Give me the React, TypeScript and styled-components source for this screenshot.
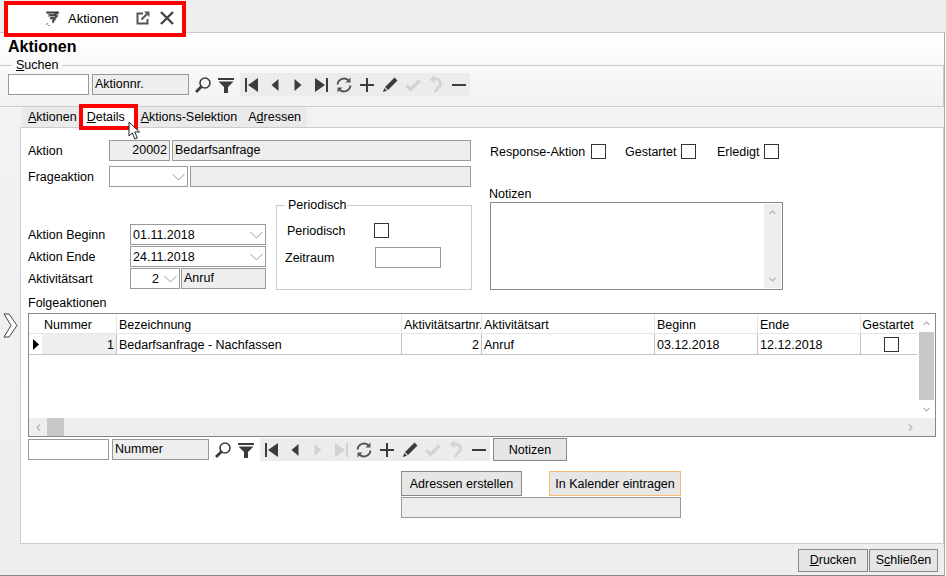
import React from "react"
import styled, { createGlobalStyle } from "styled-components"

const GlobalStyle = createGlobalStyle`
  html, body {
    margin: 0;
    padding: 0;
    background: #fff;
  }
  * {
    box-sizing: border-box;
  }
`

const Page = styled.div`
  width: 946px;
  height: 576px;
  display: flex;
  flex-direction: column;
  overflow: hidden;
  background: #fff;
  color: #000;
  font-family: "Liberation Sans", Arial, sans-serif;
  font-size: 12.5px;
`

const TabBar = styled.div`
  height: 33px;
  flex: none;
  padding: 1px 0 0 4px;
  background: #eee;
  border-bottom: 1px solid #ccc;
`

const OpenTab = styled.div`
  position: relative;
  z-index: 2;
  width: 182px;
  height: 36px;
  display: flex;
  align-items: center;
  padding: 0 0 2px 37px;
  background: #fff;
  border: 4px solid #f00;
  font-size: 13px;
  svg {
    flex: none;
  }
`

const OpenTabLabel = styled.span`
  margin: 0 16px 0 8px;
  width: 52px;
  white-space: nowrap;
`

const CloseIcon = styled.svg`
  margin-left: 10px;
`

const Window = styled.div`
  flex: 1;
  min-height: 0;
  display: flex;
  flex-direction: column;
  background: linear-gradient(#fff 0, #f2f2f2 72px, #eee 100%);
  border-right: 1px solid #aaa;
  border-bottom: 1px solid #888;
  margin-right: 1px;
`

const Title = styled.h1`
  margin: 0;
  height: 25px;
  flex: none;
  padding: 5px 0 0 8px;
  font-size: 16px;
  line-height: 18px;
  font-weight: bold;
`

const SearchGroup = styled.fieldset`
  margin: 0;
  flex: none;
  padding: 1px 0 10px 8px;
  border: 0;
  border-top: 1px solid #ccc;
  border-bottom: 1px solid #ccc;
  border-right: 1px solid #ccc;
`

const GroupLegend = styled.legend`
  margin-left: 4px;
  padding: 0 4px;
  height: 14px;
  line-height: 14px;
`

const ToolRow = styled.div`
  display: flex;
  align-items: center;
  height: 23px;
  margin-top: ${(p: { $top?: number }) => p.$top ?? 0}px;
`

const ToolInput = styled.div`
  width: 81px;
  height: 21px;
  background: #fff;
  border: 1px solid #999;
`

const ToolField = styled.div`
  width: 97px;
  height: 21px;
  margin: 0 2px 0 3px;
  padding-left: 2px;
  line-height: 19px;
  background: #eee;
  border: 1px solid #999;
`

const NavGroup = styled.div`
  display: flex;
  margin-left: 3px;
  background: #ececec;
`

const IconSlot = styled.span`
  width: 23px;
  height: 23px;
  display: flex;
  align-items: center;
  justify-content: center;
`

const ToolButton = styled.div`
  width: 74px;
  height: 23px;
  margin-left: 3px;
  text-align: center;
  line-height: 23px;
  background: #e6e6e6;
  border: 1px solid #888;
`

const MainRow = styled.div`
  flex: 1;
  min-height: 0;
  display: flex;
`

const SideStrip = styled.div`
  width: 20px;
  flex: none;
  display: flex;
  align-items: center;
  justify-content: center;
`

const Content = styled.div`
  position: relative;
  flex: 1;
  min-width: 0;
  display: flex;
  flex-direction: column;
`

const TabStrip = styled.div`
  flex: none;
  align-self: flex-start;
  height: 20px;
  margin-left: 2px;
  width: 285px;
  display: flex;
  align-items: center;
  background: #eaeaea;
`

const TabItem = styled.div<{ $left: number }>`
  margin-left: ${(p) => p.$left}px;
  white-space: nowrap;
`

const ActiveTab = styled.div`
  position: relative;
  z-index: 2;
  flex: none;
  width: 59px;
  height: 26px;
  margin: -3px 0 -3px 0;
  padding: 1px 0 0 4px;
  line-height: 16px;
  background: #fff;
  border: 4px solid #f00;
  white-space: nowrap;
`

const Pointer = styled.svg`
  position: absolute;
  z-index: 3;
  left: 108px;
  top: 14px;
`

const Panel = styled.div`
  flex: 1;
  min-height: 0;
  padding: 12px 0 0 7px;
  background: #fff;
  border: 1px solid #ccc;
`

const TopSection = styled.div`
  display: flex;
  gap: 18px;
`

const LeftColumn = styled.div`
  width: 444px;
  flex: none;
`

const RightColumn = styled.div`
  width: 293px;
  flex: none;
  padding-top: 4px;
`

const FieldRow = styled.div<{ $top?: number; $gap?: number }>`
  display: flex;
  align-items: center;
  height: 21px;
  gap: ${(p) => p.$gap ?? 2}px;
  margin-top: ${(p) => p.$top ?? 0}px;
`

const Label = styled.span<{ $w: number; $pad?: number }>`
  flex: none;
  width: ${(p) => p.$w}px;
  padding-left: ${(p) => p.$pad ?? 0}px;
  white-space: nowrap;
`

const ReadOnly = styled.div<{ $w?: number; $right?: boolean }>`
  height: 21px;
  flex: ${(p) => (p.$w ? "none" : 1)};
  width: ${(p) => (p.$w ? `${p.$w}px` : "auto")};
  margin-right: ${(p) => (p.$w ? 0 : 1)}px;
  padding: 0 2px;
  line-height: 19px;
  text-align: ${(p) => (p.$right ? "right" : "left")};
  background: #eee;
  border: 1px solid #999;
`

const Combo = styled.div<{ $w?: number; $right?: boolean }>`
  height: 21px;
  flex: ${(p) => (p.$w ? "none" : 1)};
  width: ${(p) => (p.$w ? `${p.$w}px` : "auto")};
  display: flex;
  align-items: center;
  padding: 0 1px 0 2px;
  background: #fff;
  border: 1px solid #999;
  span {
    flex: 1;
    text-align: ${(p) => (p.$right ? "right" : "left")};
    padding-right: ${(p) => (p.$right ? 4 : 0)}px;
  }
  svg {
    flex: none;
  }
`

const LowerLeft = styled.div`
  display: flex;
  margin-top: 11px;
`

const Dates = styled.div`
  width: 238px;
  flex: none;
  padding-top: 26px;
  display: flex;
  flex-direction: column;
  gap: 1px;
`

const PeriodGroup = styled.fieldset`
  width: 196px;
  height: 92px;
  flex: none;
  margin: 0 0 0 10px;
  padding: 0 0 0 8px;
  border: 1px solid #ccc;
`

const PeriodLegend = styled.legend`
  margin-left: 0;
  padding: 0 1px 0 3px;
  height: 14px;
  line-height: 14px;
`

const CheckBox = styled.span`
  display: block;
  flex: none;
  width: 15px;
  height: 15px;
  background: #fff;
  border: 1px solid #333;
`

const PlainInput = styled.div`
  width: 66px;
  height: 21px;
  flex: none;
  background: #fff;
  border: 1px solid #999;
`

const CheckRow = styled.div`
  display: flex;
  align-items: center;
  height: 15px;
`

const CheckItem = styled.div<{ $gap?: number }>`
  display: flex;
  align-items: center;
  margin-right: ${(p) => p.$gap ?? 0}px;
`

const NotesLabel = styled.div`
  margin: 28px 0 1px -1px;
  height: 14px;
  line-height: 14px;
`

const NotesBox = styled.div`
  height: 88px;
  display: flex;
  justify-content: flex-end;
  padding: 1px;
  background: #fff;
  border: 1px solid #888;
`

const ScrollTrack = styled.div<{ $w?: number }>`
  width: ${(p) => p.$w ?? 17}px;
  flex: none;
  display: flex;
  flex-direction: column;
  align-items: center;
  justify-content: space-between;
  padding: 5px 0;
  background: #eee;
`

const SectionLabel = styled.div`
  margin-top: 6px;
  height: 14px;
  line-height: 14px;
`

const GridFrame = styled.div`
  width: 908px;
  height: 124px;
  margin-top: 3px;
  display: flex;
  flex-direction: column;
  background: #fff;
  border: 1px solid #888;
`

const GridBody = styled.div`
  flex: 1;
  min-height: 0;
  display: flex;
`

const GridTable = styled.div`
  flex: 1;
  min-width: 0;
`

const GridRow = styled.div<{ $head?: boolean }>`
  display: flex;
  height: ${(p) => (p.$head ? 20 : 21)}px;
  border-bottom: 1px solid ${(p) => (p.$head ? "#e6e6e6" : "#c4c4c4")};
`

const Cell = styled.div<{ $w: number; $head?: boolean; $right?: boolean; $key?: boolean }>`
  flex: none;
  width: ${(p) => p.$w}px;
  display: flex;
  align-items: center;
  justify-content: ${(p) => (p.$right ? "flex-end" : "flex-start")};
  padding: 2px 2px 0;
  white-space: nowrap;
  overflow: hidden;
  background: ${(p) => (p.$key ? "#eee" : "#fff")};
  border-right: 1px solid ${(p) => (p.$head ? "#e6e6e6" : "#c4c4c4")};
`

const MarkerCell = styled.div`
  flex: none;
  width: 13px;
  display: flex;
  align-items: center;
  padding-left: 4px;
`

const HeadEndCell = styled.div`
  flex: 1;
  display: flex;
  align-items: center;
  justify-content: center;
  padding: 2px 2px 0 0;
  white-space: nowrap;
`

const CheckCell = styled.div`
  flex: 1;
  display: flex;
  align-items: center;
  justify-content: center;
  padding-left: 4px;
`

const GridVScroll = styled.div`
  width: 18px;
  flex: none;
  display: flex;
  flex-direction: column;
  align-items: center;
  background: #fff;
`

const ScrollEnd = styled.div`
  height: 18px;
  flex: none;
  display: flex;
  align-items: center;
  justify-content: center;
`

const VThumb = styled.div`
  width: 15px;
  flex: 1;
  background: #c8c8c8;
`

const GridHScroll = styled.div`
  height: 18px;
  flex: none;
  display: flex;
  align-items: center;
  padding: 0 20px 0 0;
  background: #eee;
`

const HThumb = styled.div`
  width: 17px;
  height: 18px;
  background: #c8c8c8;
`

const HTrack = styled.div`
  flex: 1;
`

const ArrowSlot = styled.div`
  width: 18px;
  flex: none;
  display: flex;
  justify-content: center;
`

const ActionBlock = styled.div`
  width: 280px;
  margin: 10px 0 0 373px;
`

const ActionButtons = styled.div`
  display: flex;
  justify-content: space-between;
`

const ActionButton = styled.div<{ $focus?: boolean; $w: number }>`
  width: ${(p) => p.$w}px;
  height: 25px;
  text-align: center;
  line-height: 25px;
  background: #e6e6e6;
  border: 1px solid ${(p) => (p.$focus ? "#f5bd6c" : "#888")};
`

const StatusField = styled.div`
  height: 21px;
  margin-top: 1px;
  background: #eee;
  border: 1px solid #999;
`

const Footer = styled.div`
  height: 31px;
  flex: none;
  display: flex;
  justify-content: flex-end;
  gap: 1px;
  padding: 5px 6px 0 0;
  background: #eee;
`

const FooterButton = styled.div<{ $w: number }>`
  width: ${(p) => p.$w}px;
  height: 23px;
  text-align: center;
  line-height: 21px;
  background: #e6e6e6;
  border: 1px solid #888;
`

const DARK = "#3c3c3c"
const LIGHT = "#d2d2d2"

type IconName =
  | "first"
  | "prev"
  | "next"
  | "last"
  | "refresh"
  | "plus"
  | "pencil"
  | "check"
  | "undo"
  | "minus"

const ToolIcon: React.FC<{ name: IconName; off?: boolean }> = ({ name, off }) => {
  const c = off ? LIGHT : DARK
  return (
    <svg width="20" height="20" viewBox="0 0 20 20">
      {name === "first" && (
        <>
          <rect x="3" y="3" width="2" height="14" fill={c} />
          <path d="M16 3v14L6 10z" fill={c} />
        </>
      )}
      {name === "prev" && <path d="M13.500 4v12L6.500 10z" fill={c} />}
      {name === "next" && <path d="M6.500 4v12l7-6z" fill={c} />}
      {name === "last" && (
        <>
          <rect x="15" y="3" width="2" height="14" fill={c} />
          <path d="M4 3v14l10-7z" fill={c} />
        </>
      )}
      {name === "refresh" && (
        <g fill="none" stroke="#555" strokeWidth="2">
          <path d="M3.600 9.500A6.500 6.500 0 0 1 15 5.800" />
          <path d="M16.400 10.500A6.500 6.500 0 0 1 5 14.200" />
          <path d="M16.500 2.500v5h-5z" fill="#555" stroke="none" />
          <path d="M3.500 17.500v-5h5z" fill="#555" stroke="none" />
        </g>
      )}
      {name === "plus" && <path d="M9 3h2v6h6v2h-6v6H9v-6H3V9h6z" fill={c} />}
      {name === "pencil" && (
        <path d="M14.500 2.500l3 3L8 15l-3-3zM4.300 13l2.700 2.700L3 17z" fill={c} />
      )}
      {name === "check" && (
        <path d="M3.500 10.500l4 4 9-9" fill="none" stroke={c} strokeWidth="3.200" />
      )}
      {name === "undo" && (
        <g fill="none" stroke={c} strokeWidth="2.600">
          <path d="M6 4h4a4.500 4.500 0 0 1 2 8.500L9 17" />
          <path d="M8.500 1.500L5 4.500l4 2.500" strokeWidth="2" />
        </g>
      )}
      {name === "minus" && <rect x="3" y="9" width="14" height="2" fill={c} />}
    </svg>
  )
}

const SearchIcon = () => (
  <svg width="18" height="18" viewBox="0 0 18 18">
    <circle cx="11" cy="7" r="5" fill="none" stroke={DARK} strokeWidth="1.600" />
    <path d="M7.500 10.500L2 16" stroke={DARK} strokeWidth="2.800" />
  </svg>
)

const FilterIcon = () => (
  <svg width="18" height="18" viewBox="0 0 18 18">
    <rect x="1" y="2" width="16" height="2" fill={DARK} />
    <path d="M1.500 5.500h15L11 11v6H7v-6z" fill={DARK} />
  </svg>
)

const ChevronDown = () => (
  <svg width="15" height="10" viewBox="0 0 15 10">
    <path d="M1.500 2l6 6 6-6" fill="none" stroke="#9a9a9a" strokeWidth="1" />
  </svg>
)

const SmallArrow: React.FC<{ rotate: number }> = ({ rotate }) => (
  <svg width="9" height="7" viewBox="0 0 9 7" style={{ transform: `rotate(${rotate}deg)` }}>
    <path d="M1.500 5l3-3 3 3" fill="none" stroke="#b4b4b4" strokeWidth="1.200" />
  </svg>
)

const ToolBar: React.FC<{ field: string; disabled: IconName[]; top?: number; children?: React.ReactNode }> = ({
  field,
  disabled,
  top,
  children,
}) => {
  const names: IconName[] = ["first", "prev", "next", "last", "refresh", "plus", "pencil", "check", "undo", "minus"]
  return (
    <ToolRow $top={top}>
      <ToolInput />
      <ToolField>{field}</ToolField>
      <IconSlot>
        <SearchIcon />
      </IconSlot>
      <IconSlot>
        <FilterIcon />
      </IconSlot>
      <NavGroup>
        {names.map((n) => (
          <IconSlot key={n}>
            <ToolIcon name={n} off={disabled.includes(n)} />
          </IconSlot>
        ))}
      </NavGroup>
      {children}
    </ToolRow>
  )
}

const columns = [
  { title: "Nummer", w: 75, value: "1", right: true, key: true },
  { title: "Bezeichnung", w: 285, value: "Bedarfsanfrage - Nachfassen" },
  { title: "Aktivitätsartnr.", w: 80, value: "2", right: true },
  { title: "Aktivitätsart", w: 173, value: "Anruf" },
  { title: "Beginn", w: 103, value: "03.12.2018" },
  { title: "Ende", w: 103, value: "12.12.2018" },
]

export default function App() {
  return (
    <Page>
      <GlobalStyle />
      <TabBar>
        <OpenTab>
          <svg width="15" height="15" viewBox="0 0 15 15">
            <path
              d="M1 0.500h13l-0.500 2.500-3 1 3 0.500-1.500 2-3 0.500 2.500 0.500-1.500 2-1.500 0.500 1 0.500-1.500 2-1-1.500 0.500-1.500-2.500-1.500-0.500 0 1-1.500-3-1.500 2-0.500-3-2z"
              fill="#3a3a3a"
            />
            <path d="M1.500 2.800h8M4 5.400h6M5.500 8.200h3" stroke="#fff" strokeWidth="0.700" />
            <path d="M1 13.500l2-1M3.500 14.500h1.500" stroke="#666" strokeWidth="1" />
          </svg>
          <OpenTabLabel>Aktionen</OpenTabLabel>
          <svg width="14" height="14" viewBox="0 0 14 14">
            <path d="M7 2.500H1.500v10h10V8" fill="none" stroke="#555" strokeWidth="2" />
            <path d="M5.500 8.500L11 3" stroke="#555" strokeWidth="2" />
            <path d="M8 0.500h5.500V6z" fill="#555" />
          </svg>
          <CloseIcon width="14" height="14" viewBox="0 0 14 14">
            <path d="M1 1l12 12M13 1L1 13" stroke="#444" strokeWidth="2.400" />
          </CloseIcon>
        </OpenTab>
      </TabBar>
      <Window>
        <Title>Aktionen</Title>
        <SearchGroup>
          <GroupLegend>
            <u>S</u>uchen
          </GroupLegend>
          <ToolBar field="Aktionnr." disabled={["check", "undo"]} />
        </SearchGroup>
        <MainRow>
          <SideStrip>
            <svg width="15" height="25" viewBox="0 0 15 25">
              <path d="M1 1h5l8 11.500L6 24H1l7-11.500z" fill="#fff" stroke="#444" strokeWidth="1" />
            </svg>
          </SideStrip>
          <Content>
            <TabStrip>
              <TabItem $left={6}>
                <u>A</u>ktionen
              </TabItem>
              <TabItem $left={2}>
                <ActiveTab>
                  <u>D</u>etails
                </ActiveTab>
              </TabItem>
              <TabItem $left={3}>
                <u>A</u>ktions-Selektion
              </TabItem>
              <TabItem $left={11}>
                A<u>d</u>ressen
              </TabItem>
            </TabStrip>
            <Pointer width="13" height="20" viewBox="0 0 13 20">
              <path
                d="M1 1v14l3.300-3 2.500 6 2.500-1-2.500-6H11.500z"
                fill="#fff"
                stroke="#222"
                strokeWidth="1"
              />
            </Pointer>
            <Panel>
              <TopSection>
                <LeftColumn>
                  <FieldRow>
                    <Label $w={79}>Aktion</Label>
                    <ReadOnly $w={61} $right>
                      20002
                    </ReadOnly>
                    <ReadOnly>Bedarfsanfrage</ReadOnly>
                  </FieldRow>
                  <FieldRow $top={5}>
                    <Label $w={79}>Frageaktion</Label>
                    <Combo $w={79}>
                      <span />
                      <ChevronDown />
                    </Combo>
                    <ReadOnly />
                  </FieldRow>
                  <LowerLeft>
                    <Dates>
                      <FieldRow $gap={0}>
                        <Label $w={102}>Aktion Beginn</Label>
                        <Combo>
                          <span>01.11.2018</span>
                          <ChevronDown />
                        </Combo>
                      </FieldRow>
                      <FieldRow $gap={0}>
                        <Label $w={102}>Aktion Ende</Label>
                        <Combo>
                          <span>24.11.2018</span>
                          <ChevronDown />
                        </Combo>
                      </FieldRow>
                      <FieldRow $gap={1}>
                        <Label $w={101}>Aktivitätsart</Label>
                        <Combo $w={50} $right>
                          <span>2</span>
                          <ChevronDown />
                        </Combo>
                        <ReadOnly $w={85}>Anruf</ReadOnly>
                      </FieldRow>
                    </Dates>
                    <PeriodGroup>
                      <PeriodLegend>Periodisch</PeriodLegend>
                      <FieldRow $top={8} $gap={0}>
                        <Label $w={89} $pad={2}>
                          Periodisch
                        </Label>
                        <CheckBox />
                      </FieldRow>
                      <FieldRow $top={6} $gap={0}>
                        <Label $w={90}>Zeitraum</Label>
                        <PlainInput />
                      </FieldRow>
                    </PeriodGroup>
                  </LowerLeft>
                </LeftColumn>
                <RightColumn>
                  <CheckRow>
                    <CheckItem $gap={19}>
                      <Label $w={101}>Response-Aktion</Label>
                      <CheckBox />
                    </CheckItem>
                    <CheckItem $gap={21}>
                      <Label $w={56}>Gestartet</Label>
                      <CheckBox />
                    </CheckItem>
                    <CheckItem>
                      <Label $w={47}>Erledigt</Label>
                      <CheckBox />
                    </CheckItem>
                  </CheckRow>
                  <NotesLabel>Notizen</NotesLabel>
                  <NotesBox>
                    <ScrollTrack>
                      <SmallArrow rotate={0} />
                      <SmallArrow rotate={180} />
                    </ScrollTrack>
                  </NotesBox>
                </RightColumn>
              </TopSection>
              <SectionLabel>Folgeaktionen</SectionLabel>
              <GridFrame>
                <GridBody>
                  <GridTable>
                    <GridRow $head>
                      <MarkerCell />
                      {columns.map((c) => (
                        <Cell key={c.title} $w={c.w} $head>
                          {c.title}
                        </Cell>
                      ))}
                      <HeadEndCell>Gestartet</HeadEndCell>
                    </GridRow>
                    <GridRow>
                      <MarkerCell>
                        <svg width="6" height="11" viewBox="0 0 6 11">
                          <path d="M0 0l6 5.500L0 11z" fill="#000" />
                        </svg>
                      </MarkerCell>
                      {columns.map((c) => (
                        <Cell key={c.title} $w={c.w} $right={c.right} $key={c.key}>
                          {c.value}
                        </Cell>
                      ))}
                      <CheckCell>
                        <CheckBox />
                      </CheckCell>
                    </GridRow>
                  </GridTable>
                  <GridVScroll>
                    <ScrollEnd>
                      <SmallArrow rotate={0} />
                    </ScrollEnd>
                    <VThumb />
                    <ScrollEnd>
                      <SmallArrow rotate={180} />
                    </ScrollEnd>
                  </GridVScroll>
                </GridBody>
                <GridHScroll>
                  <ArrowSlot>
                    <SmallArrow rotate={-90} />
                  </ArrowSlot>
                  <HThumb />
                  <HTrack />
                  <SmallArrow rotate={90} />
                </GridHScroll>
              </GridFrame>
              <ToolBar field="Nummer" disabled={["next", "last", "check", "undo"]} top={1}>
                <ToolButton>Notizen</ToolButton>
              </ToolBar>
              <ActionBlock>
                <ActionButtons>
                  <ActionButton $w={121}>Adressen erstellen</ActionButton>
                  <ActionButton $w={132} $focus>
                    In Kalender eintragen
                  </ActionButton>
                </ActionButtons>
                <StatusField />
              </ActionBlock>
            </Panel>
          </Content>
        </MainRow>
        <Footer>
          <FooterButton $w={70}>
            <u>D</u>rucken
          </FooterButton>
          <FooterButton $w={69}>
            S<u>c</u>hließen
          </FooterButton>
        </Footer>
      </Window>
    </Page>
  )
}
